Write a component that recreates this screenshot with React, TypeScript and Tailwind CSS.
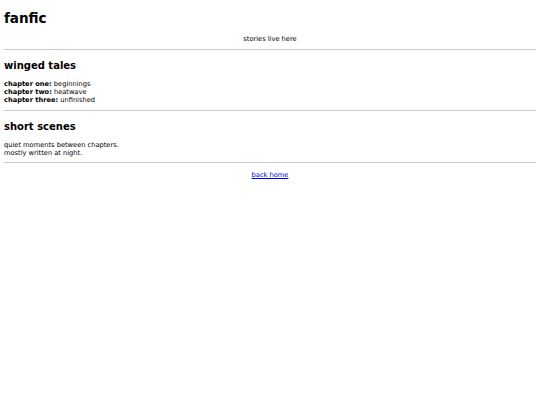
export default function App() {
  return (
    <div className="bg-white text-black px-[4px] pt-[10px]" style={{ fontFamily: '"DejaVu Sans", Verdana, sans-serif' }}>
      <h1 className="text-[13.5px] font-bold leading-[16px]">fanfic</h1>
      <p className="text-[6.67px] leading-[8px] text-center mt-[9px]">stories live here</p>
      <hr className="border-t border-[#c8c8c8] mt-[6px]" />
      <h2 className="text-[10px] font-bold leading-[12px] mt-[10px]">winged tales</h2>
      <div className="text-[6.67px] leading-[8px] mt-[8px]">
        <div><b>chapter one:</b> beginnings</div>
        <div><b>chapter two:</b> heatwave</div>
        <div><b>chapter three:</b> unfinished</div>
      </div>
      <hr className="border-t border-[#c8c8c8] mt-[6px]" />
      <h2 className="text-[10px] font-bold leading-[12px] mt-[10px]">short scenes</h2>
      <div className="text-[6.67px] leading-[8px] mt-[8px]">
        <div>quiet moments between chapters.</div>
        <div>mostly written at night.</div>
      </div>
      <hr className="border-t border-[#c8c8c8] mt-[5px]" />
      <p className="text-[6.67px] leading-[8px] text-center mt-[8px]">
        <a href="#" className="text-[#0000ee] underline">back home</a>
      </p>
    </div>
  );
}
